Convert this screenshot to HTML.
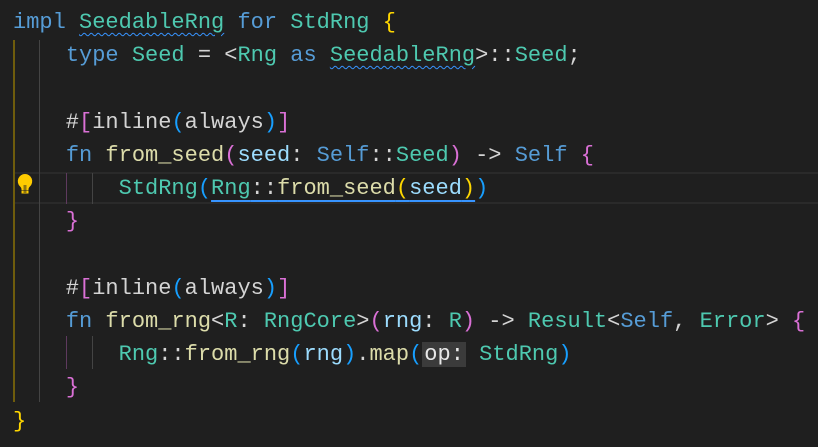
<!DOCTYPE html>
<html><head><style>
body{margin:0;background:#1f1f1f;width:818px;height:447px;overflow:hidden;position:relative;font-family:"Liberation Mono",monospace;font-size:22px;}
.l{position:absolute;left:13px;height:33px;line-height:33px;white-space:pre;color:#d4d4d4;}
.k{color:#569cd6}.t{color:#4ec9b0}.f{color:#dcdcaa}.v{color:#9cdcfe}
.g{color:#ffd700}.p{color:#da70d6}.b{color:#179fff}
.sq{text-decoration:underline wavy #3794ff;text-decoration-thickness:1px;text-underline-offset:4px}
.ul{text-decoration:underline solid #3794ff;text-decoration-thickness:2px;text-underline-offset:6px}
.hint{background:#3b3b3b;color:#e8e8e8;padding:0 2px;}
.gd{position:absolute;width:1px;}
</style></head><body>
<div style="position:absolute;left:14px;top:172px;width:804px;height:32px;border-top:2px solid #2a2a2a;border-bottom:2px solid #2a2a2a;box-sizing:border-box"></div>
<div class="gd" style="left:13px;top:40px;height:362px;background:#6e5c0c;width:2px"></div>
<div class="gd" style="left:39px;top:40px;height:362px;background:#444"></div>
<div class="gd" style="left:66px;top:173px;height:31px;background:#5e3a5e"></div>
<div class="gd" style="left:92px;top:173px;height:31px;background:#444"></div>
<div class="gd" style="left:66px;top:336px;height:33px;background:#5e3a5e"></div>
<div class="gd" style="left:92px;top:336px;height:33px;background:#444"></div>
<svg style="position:absolute;left:16px;top:173px" width="18" height="22" viewBox="0 0 18 22"><path d="M9 1a7.2 7.2 0 0 0-5 12.4c1 1 1.5 2 1.5 3V17h7v-.6c0-1 .5-2 1.5-3A7.2 7.2 0 0 0 9 1z" fill="#ffcc00"/><rect x="5.5" y="17.5" width="7" height="3" fill="#ffcc00"/><rect x="7.5" y="12" width="3" height="8" fill="#1f1f1f" opacity=".5"/></svg>
<div class="l" style="top:6px"><span class="k">impl</span> <span class="t sq">SeedableRng</span> <span class="k">for</span> <span class="t">StdRng</span> <span class="g">{</span></div>
<div class="l" style="top:39px">    <span class="k">type</span> <span class="t">Seed</span> = &lt;<span class="t">Rng</span> <span class="k">as</span> <span class="t sq">SeedableRng</span>&gt;::<span class="t">Seed</span>;</div>
<div class="l" style="top:106px">    #<span class="p">[</span>inline<span class="b">(</span>always<span class="b">)</span><span class="p">]</span></div>
<div class="l" style="top:139px">    <span class="k">fn</span> <span class="f">from_seed</span><span class="p">(</span><span class="v">seed</span>: <span class="k">Self</span>::<span class="t">Seed</span><span class="p">)</span> -&gt; <span class="k">Self</span> <span class="p">{</span></div>
<div class="l" style="top:172px">        <span class="t">StdRng</span><span class="b">(</span><span class="ul"><span class="t">Rng</span>::<span class="f">from_seed</span><span class="g">(</span><span class="v">seed</span><span class="g">)</span></span><span class="b">)</span></div>
<div class="l" style="top:205px">    <span class="p">}</span></div>
<div class="l" style="top:272px">    #<span class="p">[</span>inline<span class="b">(</span>always<span class="b">)</span><span class="p">]</span></div>
<div class="l" style="top:305px">    <span class="k">fn</span> <span class="f">from_rng</span>&lt;<span class="t">R</span>: <span class="t">RngCore</span>&gt;<span class="p">(</span><span class="v">rng</span>: <span class="t">R</span><span class="p">)</span> -&gt; <span class="t">Result</span>&lt;<span class="k">Self</span>, <span class="t">Error</span>&gt; <span class="p">{</span></div>
<div class="l" style="top:338px">        <span class="t">Rng</span>::<span class="f">from_rng</span><span class="b">(</span><span class="v">rng</span><span class="b">)</span>.<span class="f">map</span><span class="b">(</span><span class="hint">op:</span> <span class="t">StdRng</span><span class="b">)</span></div>
<div class="l" style="top:371px">    <span class="p">}</span></div>
<div class="l" style="top:405px"><span class="g">}</span></div>
</body></html>
